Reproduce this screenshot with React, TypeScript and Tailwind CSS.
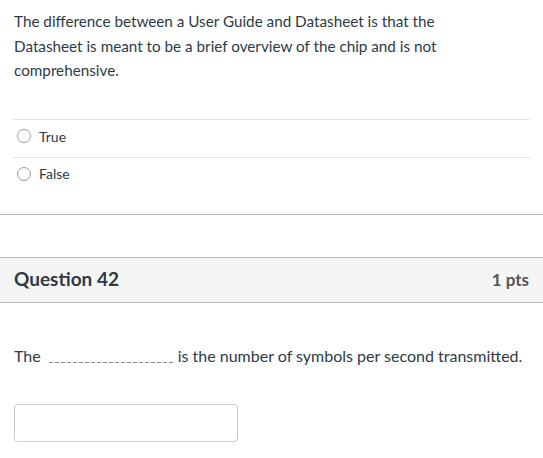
export default function App() {
  return (
    <div className="h-[458px] w-[543px] overflow-hidden bg-white font-['Lato','Noto_Sans',sans-serif] text-[#2d3b45]">
      <div className="w-[480px] px-[14px] pt-[9px] text-[15.25px] leading-[24.5px]">
        The difference between a User Guide and Datasheet is that the Datasheet is meant to be a brief overview of the chip and is not comprehensive.
      </div>

      <div className="mx-[13px] mt-[36px] border-t border-[#e3e3e3]">
        <label className="flex h-[37px] items-center gap-[8px] pb-[4px] pl-[4px] text-[14px] text-[#2d3b45]">
          <span className="h-[14px] w-[14px] rounded-full border border-[#999] bg-white" />
          True
        </label>
        <label className="flex h-[37px] items-center gap-[8px] border-t border-[#e3e3e3] pb-[4px] pl-[4px] text-[14px] text-[#2d3b45]">
          <span className="h-[14px] w-[14px] rounded-full border border-[#999] bg-white" />
          False
        </label>
      </div>

      <div className="mt-[20px] border-t border-[#b8b8b8]" />

      <div className="mt-[42px] flex h-[46px] items-center justify-between border-y border-[#b8b8b8] bg-[#f5f5f5] px-[14px]">
        <span className="text-[19px] font-bold text-[#2d3b45]">Question 42</span>
        <span className="text-[17px] font-bold text-[#555]">1 pts</span>
      </div>

      <div className="mt-[41px] flex items-baseline px-[14px] text-[16px]">
        <span>The</span>
        <span className="ml-[8px] mr-[5px] h-px w-[124px] translate-y-[1px] bg-[repeating-linear-gradient(90deg,#8a8a8a_0_4px,transparent_4px_6px)]" />
        <span>is the number of symbols per second transmitted.</span>
      </div>

      <div className="ml-[14px] mt-[36px] h-[38px] w-[224px] rounded-[4px] border border-[#c7cdd1] bg-white" />
    </div>
  );
}
